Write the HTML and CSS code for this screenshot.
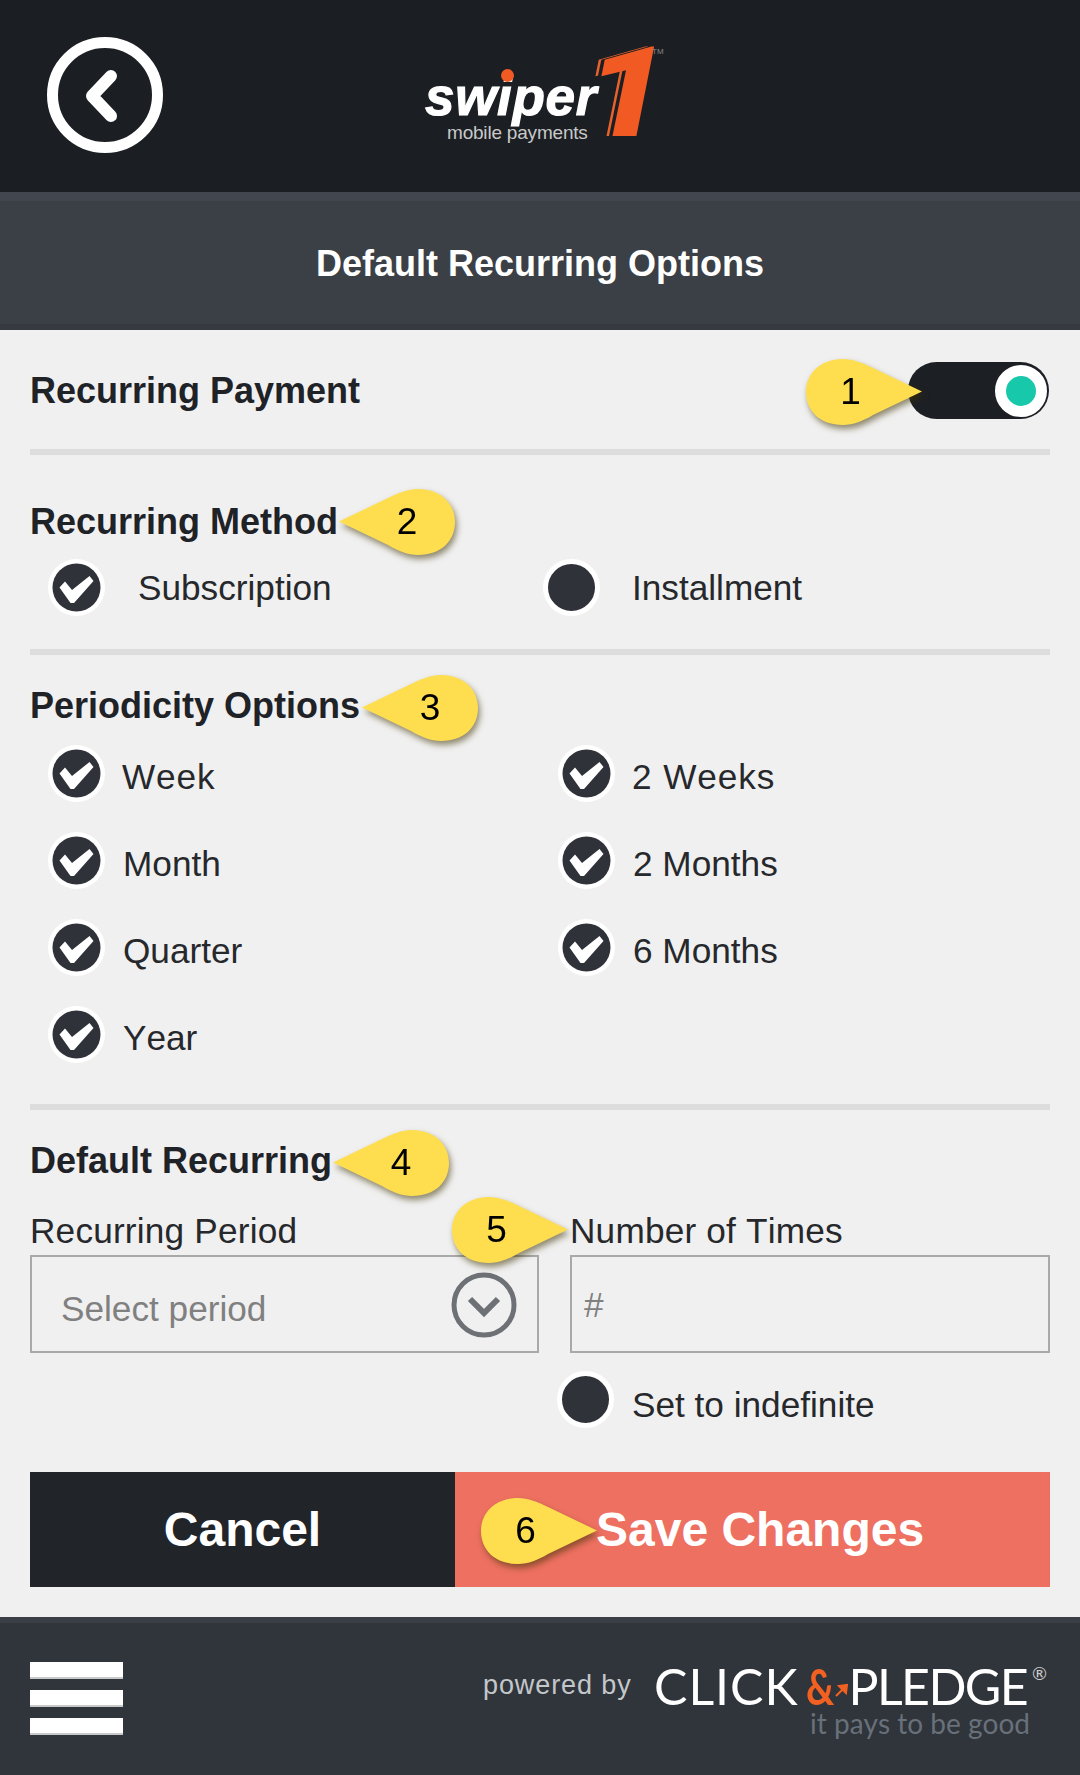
FILE: index.html
```html
<!DOCTYPE html>
<html lang="en">
<head>
<meta charset="utf-8">
<title>Default Recurring Options</title>
<link rel="stylesheet" href="styles.css">
</head>
<body>
<svg class="sprite" aria-hidden="true">
  <symbol id="check" viewBox="0 0 57 57">
    <circle cx="28.5" cy="28.5" r="28.5" fill="#fff"/>
    <circle cx="28.5" cy="28.5" r="24" fill="#2f3339"/>
    <path d="M11.5 28.5 L17 22.5 L24 31 L41.5 17 L45.5 22 L26 44 L22.5 44 Z" fill="#fff"/>
  </symbol>
  <symbol id="drop" viewBox="0 0 118 68" preserveAspectRatio="none">
    <path d="M117 33.5 L68 10 C58 5 48 1 38 1 C15 1 1 16 1 34 C1 53 15 67 38 67 C48 67 58 63 68 57 Z"/>
  </symbol>
</svg>
<div class="page">
  <header class="topbar">
    <svg class="back" viewBox="0 0 116 116">
      <circle cx="58" cy="58" r="52.5" fill="none" stroke="#fff" stroke-width="11"/>
      <path d="M64 39 L45 59 L64 79" fill="none" stroke="#fff" stroke-width="12" stroke-linecap="round" stroke-linejoin="round"/>
    </svg>
    <div class="logo">
      <div class="logo-words">
        <span class="logo-swiper">swiper</span>
        <span class="logo-sub">mobile payments</span>
      </div>
      <span class="logo-one">1</span>
      <span class="logo-tm">TM</span>
      <span class="logo-dot"></span>
    </div>
  </header>
  <div class="titlebar"><h1>Default Recurring Options</h1></div>

  <main class="content">
    <section class="sec sec-payment">
      <h2>Recurring Payment</h2>
      <div class="toggle"><span class="knob"></span></div>
    </section>

    <section class="sec sec-method">
      <h2>Recurring Method</h2>
      <div class="method-row">
        <div class="opt opt-a"><svg class="tick"><use href="#check"/></svg><span>Subscription</span></div>
        <div class="opt opt-b"><span class="radio"></span><span>Installment</span></div>
      </div>
    </section>

    <section class="sec sec-period">
      <h2>Periodicity Options</h2>
      <div class="period-grid">
        <div class="popt"><svg class="tick"><use href="#check"/></svg><span class="wide">Week</span></div>
        <div class="popt"><svg class="tick"><use href="#check"/></svg><span class="wide">2 Weeks</span></div>
        <div class="popt"><svg class="tick"><use href="#check"/></svg><span>Month</span></div>
        <div class="popt"><svg class="tick"><use href="#check"/></svg><span>2 Months</span></div>
        <div class="popt"><svg class="tick"><use href="#check"/></svg><span>Quarter</span></div>
        <div class="popt"><svg class="tick"><use href="#check"/></svg><span>6 Months</span></div>
        <div class="popt"><svg class="tick"><use href="#check"/></svg><span>Year</span></div>
      </div>
    </section>

    <section class="sec-default">
      <h2>Default Recurring</h2>
      <div class="fields">
        <div>
          <div class="field-label">Recurring Period</div>
          <div class="box box-select">
            <span>Select period</span>
            <svg class="caret" viewBox="0 0 66 66">
              <circle cx="33" cy="33" r="30" fill="none" stroke="#6d7074" stroke-width="5"/>
              <path d="M19 27 L33 41 L47 27" fill="none" stroke="#6d7074" stroke-width="6"/>
            </svg>
          </div>
        </div>
        <div>
          <div class="field-label">Number of Times</div>
          <div class="box box-input"><span>#</span></div>
          <div class="indef"><span class="radio"></span><span>Set to indefinite</span></div>
        </div>
      </div>
      <div class="actions">
        <div class="btn btn-cancel">Cancel</div>
        <div class="btn btn-save">Save Changes</div>
      </div>
    </section>
  </main>

  <footer class="footer">
    <div class="burger"><span></span><span></span><span></span></div>
    <div class="brand">
      <span class="powered">powered by</span>
      <div class="cp">
        <div class="cp-line">
          <span class="cp-click">CLICK</span>
          <span class="cp-amp">&amp;</span>
          <span>PLEDGE</span>
          <span class="cp-reg">®</span>
          <svg class="cp-arrow" viewBox="0 0 14 14"><path d="M1 13 L9 5 M4 3 L12 2 L11 10 Z" fill="#f26122" stroke="#f26122" stroke-width="2"/></svg>
        </div>
        <div class="cp-tag">it pays to be good</div>
      </div>
    </div>
  </footer>

  <div class="callout c1"><svg><use href="#drop"/></svg><b>1</b></div>
  <div class="callout flip c2"><svg><use href="#drop"/></svg><b>2</b></div>
  <div class="callout flip c3"><svg><use href="#drop"/></svg><b>3</b></div>
  <div class="callout flip c4"><svg><use href="#drop"/></svg><b>4</b></div>
  <div class="callout c5"><svg><use href="#drop"/></svg><b>5</b></div>
  <div class="callout c6"><svg><use href="#drop"/></svg><b>6</b></div>
</div>
</body>
</html>
```
FILE: styles.css
```css
* { box-sizing: border-box; }
html, body { margin: 0; padding: 0; }
body { font-family: "Liberation Sans", Arial, sans-serif; color: #26282c; background: #f0f0f0; font-kerning: none; }
.sprite { position: absolute; width: 0; height: 0; }
.page { position: relative; width: 1080px; height: 1775px; overflow: hidden; background: #f0f0f0; }

h1, h2 { margin: 0; font-size: 36px; line-height: 40px; font-weight: 700; color: #1f2226; }

.topbar { height: 192px; background: #1b1e23; display: flex; padding: 37px 0 0 47px; }
.back { width: 116px; height: 116px; flex: none; }
.logo { position: relative; margin: 10px 0 0 262px; width: 240px; height: 92px; display: flex; }
.logo-words { display: flex; flex-direction: column; width: 168px; }
.logo-swiper { font-size: 53px; line-height: 44px; margin-top: 28px; font-weight: 700; font-style: italic; color: #fff; letter-spacing: 0.7px; -webkit-text-stroke: 1.2px #fff; }
.logo-sub { font-size: 19px; line-height: 20px; color: #c9c9c9; margin: 4px 0 0 22px; letter-spacing: -0.2px; white-space: nowrap; }
.logo-one { font-family: Roboto, sans-serif; font-size: 126px; line-height: 92px; font-weight: 900; font-style: italic; color: #f15a22; margin-left: -8px; transform: scaleX(1.18); transform-origin: left center; text-shadow: -3px 0 #1b1e23, -5px 0 #e8622c; }
.logo-tm { position: absolute; left: 227px; top: 0; font-size: 8px; color: #888; }
.logo-dot { position: absolute; left: 76px; top: 22px; width: 13px; height: 13px; border-radius: 50%; background: #f15a22; }

.titlebar { height: 138px; background: #3b3f46; border-top: 9px solid #42464e; border-bottom: 6px solid #363a40; display: flex; justify-content: center; padding-top: 43px; color: #fff; }
.titlebar h1 { color: #fff; }

.content { height: 1287px; padding: 0 30px; }
.sec { border-bottom: 6px solid #dddddd; }
.sec-payment { height: 125px; display: flex; justify-content: space-between; align-items: center; padding: 2px 0 0; }
.toggle { width: 141px; height: 57px; margin-right: 1px; border-radius: 29px; background: #1c1f24; display: flex; justify-content: flex-end; align-items: center; padding-right: 2px; }
.knob { width: 52px; height: 52px; border-radius: 50%; background: #18c8aa; border: 11px solid #fff; }

.sec-method { height: 200px; padding-top: 47px; }
.method-row { display: flex; padding: 17px 0 0 18px; font-size: 35.2px; line-height: 40px; }
.opt { display: flex; align-items: center; }
.opt-a { width: 495px; gap: 33px; }
.opt-b { gap: 32px; }
.tick { width: 57px; height: 57px; flex: none; display: block; }
.radio { width: 57px; height: 57px; flex: none; border-radius: 50%; background: #2f3339; border: 5px solid #fff; }

.sec-period { height: 455px; padding-top: 31px; }
.period-grid { display: grid; grid-template-columns: 510px 1fr; grid-auto-rows: 87px; padding: 4px 0 0 18px; font-size: 35.2px; line-height: 40px; }
.popt { display: flex; align-items: center; gap: 18px; }
.popt span { padding-top: 7px; }
.popt .wide { letter-spacing: 0.9px; margin-left: -1px; }

.sec-default { padding-top: 31px; }
.fields { display: grid; grid-template-columns: 509px 480px; column-gap: 31px; margin-top: 30px; }
.field-label { font-size: 35.2px; line-height: 40px; margin-bottom: 4px; letter-spacing: 0.2px; }
.box { height: 98px; border: 2px solid #a9a9a9; font-size: 35.2px; line-height: 40px; color: #808080; display: flex; align-items: center; letter-spacing: 0; }
.box-select { justify-content: space-between; padding: 9px 20px 0 29px; }
.caret { width: 66px; height: 66px; margin-top: -7px; flex: none; }
.box-input { padding: 0 0 0 12px; }
.box-input span { margin-top: 1px; }
.indef { display: flex; align-items: center; gap: 18px; margin: 18px 0 0 -13px; font-size: 35.2px; line-height: 40px; }
.indef span:last-child { padding-top: 10px; }
.actions { display: flex; margin-top: 44px; height: 115px; }
.btn { font-size: 48px; font-weight: 700; color: #fff; display: flex; align-items: center; line-height: 56px; }
.btn-cancel { width: 425px; background: #212428; justify-content: center; }
.btn-save { width: 595px; background: #ee7061; padding-left: 141px; }

.footer { height: 158px; background: #30343b; border-top: 6px solid #3a3f46; display: flex; justify-content: space-between; padding: 39px 0 0 30px; }
.burger { width: 93px; display: flex; flex-direction: column; gap: 11px; }
.burger span { height: 17px; background: #fff; box-shadow: inset 0 -2px 0 #c8c8c8; }
.brand { display: flex; padding-right: 50px; margin-top: 1px; }
.powered { font-size: 27px; line-height: 32px; color: #c4c7ca; margin-top: 6px; white-space: nowrap; width: 171px; letter-spacing: 0.9px; }
.cp { width: 376px; }
.cp-line { display: flex; position: relative; font-family: Lato, sans-serif; font-size: 50px; line-height: 46px; color: #fff; letter-spacing: -1.6px; white-space: nowrap; }
.cp-click { letter-spacing: 1px; margin-right: 7px; }
.cp-amp { width: 43px; color: #f26122; font-weight: 700; display: block; transform: scaleX(.78); transform-origin: left center; }
.cp-reg { position: absolute; left: 378px; top: 2px; font-size: 18px; line-height: 16px; letter-spacing: 0; color: #ccc; }
.cp-arrow { position: absolute; left: 181px; top: 20px; width: 14px; height: 14px; }
.cp-tag { font-family: Lato, sans-serif; font-size: 28px; line-height: 30px; color: #68707a; margin-top: -1px; white-space: nowrap; text-align: right; }

.callout { position: absolute; width: 118px; height: 68px; display: flex; align-items: center; justify-content: center; filter: drop-shadow(2px 4px 3px rgba(60,50,0,.55)); }
.callout svg { position: absolute; inset: 0; width: 100%; height: 100%; fill: #fede4f; }
.callout.flip svg { transform: scaleX(-1); }
.callout b { position: relative; font-weight: 400; font-size: 37px; line-height: 40px; color: #000; padding-right: 27px; }
.callout.flip b { padding: 0 0 0 20px; }
.c1 { left: 805px; top: 358px; }
.c2 { left: 338px; top: 488px; }
.c3 { left: 361px; top: 674px; }
.c4 { left: 332px; top: 1129px; }
.c5 { left: 451px; top: 1196px; }
.c6 { left: 480px; top: 1497px; }
```
